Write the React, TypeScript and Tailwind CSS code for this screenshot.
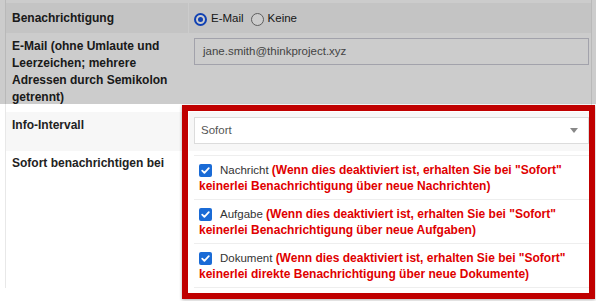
const ITEMS = [
  {
    label: 'Nachricht',
    note: '(Wenn dies deaktiviert ist, erhalten Sie bei "Sofort" keinerlei Benachrichtigung über neue Nachrichten)',
  },
  {
    label: 'Aufgabe',
    note: '(Wenn dies deaktiviert ist, erhalten Sie bei "Sofort" keinerlei Benachrichtigung über neue Aufgaben)',
  },
  {
    label: 'Dokument',
    note: '(Wenn dies deaktiviert ist, erhalten Sie bei "Sofort" keinerlei direkte Benachrichtigung über neue Dokumente)',
  },
];

function Radio({ checked, label }: { checked: boolean; label: string }) {
  return (
    <span className="inline-flex items-center gap-[4px]">
      {checked ? (
        <span className="flex h-[13px] w-[13px] items-center justify-center rounded-full border-2 border-[#1552e0] bg-white">
          <span className="h-[5px] w-[5px] rounded-full bg-[#1552e0]" />
        </span>
      ) : (
        <span className="h-[13px] w-[13px] rounded-full border border-[#767676] bg-white" />
      )}
      <span>{label}</span>
    </span>
  );
}

function CheckBox() {
  return (
    <span className="mr-[8px] inline-flex h-[13px] w-[13px] items-center justify-center rounded-[2px] bg-[#1a6bd6] align-[-2px]">
      <svg width="11" height="11" viewBox="0 0 11 11" fill="none">
        <path d="M2.2 5.6l2.2 2.2 4.4-4.6" stroke="white" strokeWidth="1.8" strokeLinecap="round" strokeLinejoin="round" />
      </svg>
    </span>
  );
}

export default function App() {
  return (
    <div className="relative h-[301px] w-[596px] overflow-hidden bg-white font-['Liberation_Sans',Arial,sans-serif] text-[#222]">
      <div className="ml-[5px] w-[587px] border-x border-[#e8e8e8]">
        <div className="h-[3px] bg-white" />

        {/* Benachrichtigung */}
        <div className="flex h-[30px] bg-[#f5f5f5]">
          <div className="flex w-[182px] items-center pl-[6px] text-[12px] font-bold">Benachrichtigung</div>
          <div className="flex flex-1 items-center gap-[7px] border-l border-white pl-[5px] pt-[2px] text-[11.5px]">
            <Radio checked label="E-Mail" />
            <Radio checked={false} label="Keine" />
          </div>
        </div>

        {/* E-Mail */}
        <div className="flex bg-white">
          <div className="w-[182px] pb-[6px] pl-[6px] pr-[6px] pt-[5px] text-[12px] font-bold leading-[17px]">
            E-Mail (ohne Umlaute und Leerzeichen; mehrere Adressen durch Semikolon getrennt)
          </div>
          <div className="flex-1 border-l border-white pl-[5px] pr-[2px] pt-[5px]">
            <div className="flex h-[27px] items-center border border-[#cbcbd6] bg-white pl-[8px] text-[11.5px] text-[#555]">
              jane.smith@thinkproject.xyz
            </div>
          </div>
        </div>

        {/* Info-Intervall */}
        <div className="flex h-[39px] bg-[#f7f7f7]">
          <div className="w-[182px] pl-[6px] pt-[5px] text-[12px] font-bold leading-[17px]">Info-Intervall</div>
          <div className="flex-1 border-l border-white pl-[5px] pr-[2px] pt-[5px]">
            <div className="flex h-[27px] items-center justify-between border border-[#dcdcdc] bg-white pl-[6px] pr-[10px] text-[11.5px] text-[#555]">
              <span>Sofort</span>
              <svg width="8" height="5" viewBox="0 0 8 5">
                <path d="M0 0h8L4 5z" fill="#888" />
              </svg>
            </div>
          </div>
        </div>

        {/* Sofort benachrichtigen bei */}
        <div className="flex bg-white">
          <div className="w-[182px] pl-[6px] pt-[4px] text-[12px] font-bold leading-[17px]">Sofort benachrichtigen bei</div>
          <div className="flex-1 border-l border-white pl-[5px] pr-[2px] pt-[4px]">
            <ul className="border-t border-[#eeeeee]">
              {ITEMS.map((it) => (
                <li key={it.label} className="border-b border-[#eeeeee] px-[5px] pb-[5px] pt-[6px] text-[11.5px] leading-[16px] text-[#333]">
                  <CheckBox />
                  {it.label}{' '}
                  <b className="text-[12px] text-[#e00000]">{it.note}</b>
                </li>
              ))}
            </ul>
          </div>
        </div>
      </div>

      {/* tour overlay + highlight */}
      <div className="pointer-events-none absolute inset-x-0 top-0 h-[104px] bg-black/20" />
      <div className="pointer-events-none absolute left-[182px] top-[105px] h-[194px] w-[413px] border-[6px] border-[#c00000] shadow-[0_1px_3px_rgba(0,0,0,0.3)]" />
    </div>
  );
}
